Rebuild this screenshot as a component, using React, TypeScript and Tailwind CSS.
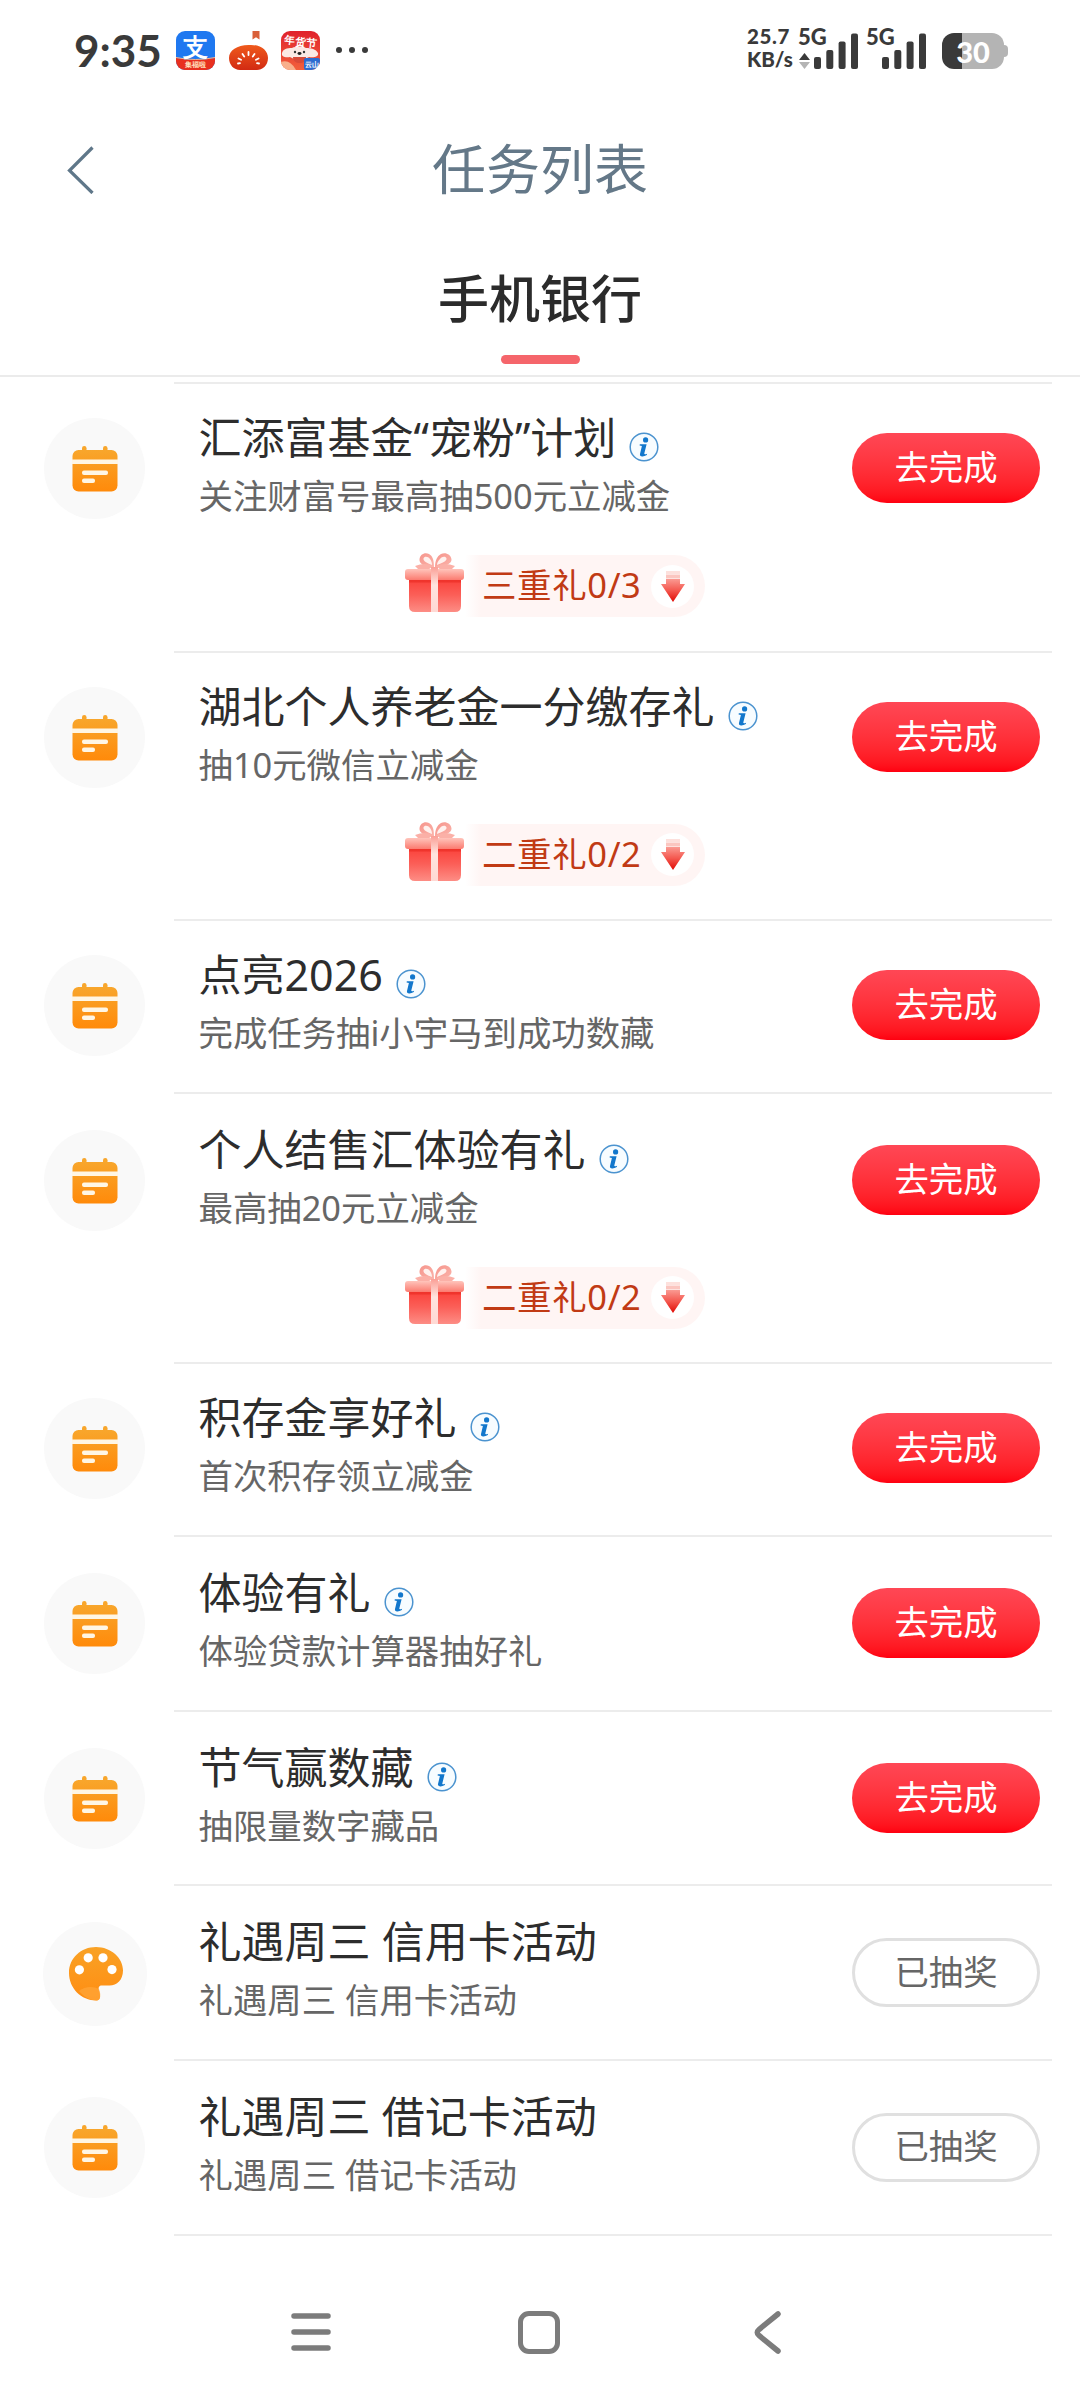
import React from "react";

type Task = {
  title: string;
  desc: string;
  info?: boolean;
  gift?: string;
  done?: boolean;
  icon?: "calendar" | "palette";
};

const tasks: Task[] = [
  { title: "汇添富基金“宠粉”计划", desc: "关注财富号最高抽500元立减金", info: true, gift: "三重礼0/3" },
  { title: "湖北个人养老金一分缴存礼", desc: "抽10元微信立减金", info: true, gift: "二重礼0/2" },
  { title: "点亮2026", desc: "完成任务抽i小宇马到成功数藏", info: true },
  { title: "个人结售汇体验有礼", desc: "最高抽20元立减金", info: true, gift: "二重礼0/2" },
  { title: "积存金享好礼", desc: "首次积存领立减金", info: true },
  { title: "体验有礼", desc: "体验贷款计算器抽好礼", info: true },
  { title: "节气赢数藏", desc: "抽限量数字藏品", info: true },
  { title: "礼遇周三 信用卡活动", desc: "礼遇周三 信用卡活动", done: true, icon: "palette" },
  { title: "礼遇周三 借记卡活动", desc: "礼遇周三 借记卡活动", done: true },
];

const AlipayIcon = () => (
  <svg width="39" height="39" viewBox="0 0 39 39">
    <defs>
      <clipPath id="alipayClip"><rect width="39" height="39" rx="9" /></clipPath>
    </defs>
    <g clipPath="url(#alipayClip)">
      <rect width="39" height="39" fill="#1f78f0" />
      <path d="M0 27 Q19.5 31 39 27 V39 H0Z" fill="#e8301f" />
      <path d="M0 26.5 Q19.5 30.5 39 26.5" stroke="#f6b48a" strokeWidth="1" fill="none" />
    </g>
    <text x="19.5" y="24.500" textAnchor="middle" fontSize="25" fontWeight="700" fill="#fff">支</text>
    <text x="19.5" y="36" textAnchor="middle" fontSize="6.5" fontWeight="700" fill="#ffe3c0">集福啦</text>
  </svg>
);

const TomatoIcon = () => (
  <svg width="39" height="39" viewBox="0 0 39 39">
    <defs>
      <linearGradient id="tomato" x1="0" y1="0" x2="0" y2="1">
        <stop offset="0" stopColor="#ef5a1c" />
        <stop offset="1" stopColor="#d22a12" />
      </linearGradient>
    </defs>
    <path d="M23.500 0h7v8.500l-3.500-2.200-3.500 2.200z" fill="#d9603a" />
    <path d="M19.500 14C31 13 39 19 39 27c0 8-6 12-11 12H11C5 39 0 34 0 27c0-8 8-12.500 19.500-13z" fill="url(#tomato)" />
    <g stroke="#fff" strokeWidth="1.800" strokeLinecap="round">
      <path d="M19.500 21v3M13.500 23l1.700 2.600M25.500 23l-1.700 2.600M9.500 27.500l2.500 1.300M29.500 27.500l-2.500 1.300M9 32.500l2-.4M30 32.500l-2-.4" />
    </g>
  </svg>
);

const ShopIcon = () => (
  <svg width="39" height="39" viewBox="0 0 39 39">
    <defs>
      <clipPath id="shopClip"><rect width="39" height="39" rx="9" /></clipPath>
      <linearGradient id="shopBg" x1="0" y1="0" x2="0" y2="1">
        <stop offset="0" stopColor="#e0222c" />
        <stop offset="1" stopColor="#f2603c" />
      </linearGradient>
    </defs>
    <g clipPath="url(#shopClip)">
      <rect width="39" height="39" fill="url(#shopBg)" />
      <path d="M1 22c1-4 5-5 10-5 4-2 10-2 14 0 5 0 10 1 12 5 1 4-5 5-9 4l-4 2h-11l-4-2c-4 1-9 0-8-4z" fill="#fbe9e4" />
      <circle cx="14" cy="21" r="1.200" fill="#333" />
      <circle cx="23" cy="21" r="1.200" fill="#333" />
      <ellipse cx="18.500" cy="22.500" rx="2" ry="1.400" fill="#222" />
      <path d="M12 26h13c0 4-3 6-6.500 6S12 30 12 26z" fill="#d84a38" />
      <path d="M0 31q9-3 15 8H0z" fill="#f8b08c" />
      <rect x="23" y="27" width="16" height="12" rx="2" fill="#2c6bd0" />
    </g>
    <text x="20" y="14" textAnchor="middle" fontSize="10.500" fontWeight="700" fill="#fff" transform="rotate(6 19 12)">年货节</text>
    <text x="31" y="35.500" textAnchor="middle" fontSize="7" fontWeight="700" fill="#fff">云山</text>
  </svg>
);

const SignalBars = () => (
  <svg width="44" height="36" viewBox="0 0 44 36" fill="#3a3a3a">
    <rect x="0" y="24" width="7" height="12" rx="2" />
    <rect x="12.300" y="17" width="7" height="19" rx="2" />
    <rect x="24.600" y="8.500" width="7" height="27.500" rx="2" />
    <rect x="37" y="0.500" width="7" height="35.500" rx="2" />
  </svg>
);

const StatusBar = () => (
  <div className="flex h-[100px] items-center pl-[74px] pr-[72px] font-['Lato'] text-[#3a3a3a]">
    <span className="w-[102px] text-[44px] font-bold leading-none">9:35</span>
    <div className="flex gap-[13.500px]">
      <AlipayIcon />
      <TomatoIcon />
      <ShopIcon />
    </div>
    <div className="ml-[16px] flex gap-[7px]">
      <i className="size-[6px] rounded-full bg-[#3a3a3a]" />
      <i className="size-[6px] rounded-full bg-[#3a3a3a]" />
      <i className="size-[6px] rounded-full bg-[#3a3a3a]" />
    </div>
    <div className="ml-auto flex h-[38px] items-end">
      <div className="mb-[-2px] w-[51px] whitespace-nowrap text-[20.500px] font-black leading-[23px]">
        <div className="tracking-[0.6px]">25.7</div>
        <div>KB/s</div>
      </div>
      <div className="relative flex w-[60px] items-end justify-end">
        <span className="absolute left-0 top-[-8px] text-[22px] font-black leading-[23px]">5G</span>
        <svg className="mr-[4px]" width="11" height="16" viewBox="0 0 11 16">
          <path d="M5.500 0L11 7H0z" fill="#3a3a3a" />
          <path d="M5.500 16L0 9h11z" fill="#b4b4b4" />
        </svg>
        <SignalBars />
      </div>
      <div className="relative ml-[8px] flex w-[60px] justify-end">
        <span className="absolute left-0 top-[-8px] text-[22px] font-black leading-[23px]">5G</span>
        <SignalBars />
      </div>
      <div className="ml-[16px] flex items-center">
        <div className="flex h-[36px] w-[62px] items-center justify-center rounded-[12px] bg-[linear-gradient(90deg,#3a3a3a_33%,#b4b4b4_33%)] text-[29px] font-black leading-none text-white">
          30
        </div>
        <div className="h-[12px] w-[4px] rounded-r-[4px] bg-[#b4b4b4]" />
      </div>
    </div>
  </div>
);

const CalendarIcon = () => (
  <svg width="46" height="46" viewBox="0 0 46 46">
    <defs>
      <linearGradient id="cal" x1="0" y1="0" x2="0" y2="1">
        <stop offset="0" stopColor="#f8a62c" />
        <stop offset="1" stopColor="#ff8a0a" />
      </linearGradient>
    </defs>
    <rect x="10" y="0" width="4.500" height="9" rx="2.200" fill="#f8a62c" />
    <rect x="31" y="0" width="4.500" height="9" rx="2.200" fill="#f8a62c" />
    <rect x="0.500" y="4" width="45" height="41.500" rx="6" fill="url(#cal)" />
    <rect x="0" y="13.500" width="46" height="4.500" fill="#fff6e4" />
    <rect x="10" y="24.500" width="26" height="4.500" rx="2" fill="#fff6e4" />
    <rect x="10" y="32.500" width="13" height="4.500" rx="2" fill="#fff6e4" />
  </svg>
);

const PaletteIcon = () => (
  <svg width="54" height="54" viewBox="0 0 54 54">
    <defs>
      <linearGradient id="pal" x1="0" y1="0" x2="0" y2="1">
        <stop offset="0" stopColor="#f9a226" />
        <stop offset="1" stopColor="#ff8d12" />
      </linearGradient>
    </defs>
    <path
      d="M27 0C42 0 54 11 54 23.500C54 33 48 38.500 40.500 38.500H33C30 38.500 29 40.500 30 43.500C31.500 48 32 53.500 27.500 53.500C12 53.500 0 41 0 26C0 11 12 0 27 0Z"
      fill="url(#pal)"
    />
    <path d="M10 44c6-5 14-5 20-2 2 5 2 11.500-2.500 11.500-7 0-13-4-17.500-9.500z" fill="#ffa63a" opacity="0.7" />
    <circle cx="19.200" cy="10.800" r="4.600" fill="#fff" />
    <circle cx="34" cy="10.800" r="4.600" fill="#fff" />
    <circle cx="10.400" cy="22.800" r="4.600" fill="#fff" />
    <circle cx="43" cy="22.600" r="4.600" fill="#fff" />
  </svg>
);

const InfoIcon = () => (
  <svg width="30" height="30" viewBox="0 0 30 30">
    <circle cx="15" cy="15" r="13.800" fill="#f7fcff" stroke="#4b93cf" strokeWidth="1.500" />
    <circle cx="16.600" cy="7.900" r="2.600" fill="#1277cc" />
    <path d="M10.800 12.300h6.800l-2.300 9.200q-.3 1.500 2.800.3l-.3 1.200q-2.400 1.500-4.600 1.400-2.700-.1-2.200-2.500l1.900-7.800-2.300-.5z" fill="#1277cc" />
  </svg>
);

const GiftIcon = () => (
  <svg width="60" height="62" viewBox="0 0 60 62">
    <defs>
      <linearGradient id="giftBox" x1="0" y1="0" x2="0" y2="1">
        <stop offset="0" stopColor="#fb3f38" />
        <stop offset="0.5" stopColor="#fb5f58" />
        <stop offset="1" stopColor="#fd8d85" />
      </linearGradient>
      <linearGradient id="giftLid" x1="0" y1="0" x2="0" y2="1">
        <stop offset="0" stopColor="#ffc4bb" />
        <stop offset="1" stopColor="#fb7b70" />
      </linearGradient>
      <linearGradient id="ribbon" x1="0" y1="0" x2="0" y2="1">
        <stop offset="0" stopColor="#fb9f96" />
        <stop offset="0.4" stopColor="#ffe4df" />
        <stop offset="1" stopColor="#ffd9d4" />
      </linearGradient>
      <linearGradient id="bow" x1="0" y1="0" x2="1" y2="1">
        <stop offset="0" stopColor="#f6958c" />
        <stop offset="1" stopColor="#fbb3aa" />
      </linearGradient>
    </defs>
    <path d="M28 15C20 15 14 12 14.500 7.500C15 2 20 0 24 2C28 4 29 9 29 15Z" fill="url(#bow)" />
    <path d="M27 13C22 11 18 9 18.500 6.500C19 4 23 4 25 7C26.500 9 27 11 27 13Z" fill="#fff1ee" />
    <path d="M31 15C39 15 47 12 46.500 7.500C46 2 40 0 36 2C32 4 30 9 30 15Z" fill="url(#bow)" />
    <path d="M32 13C37 11 42 9 41.500 6.500C41 4 37 4 35 7C33 9 32 11 32 13Z" fill="#fff1ee" />
    <path d="M10 14Q20 10 28 14L23 18H14ZM50 14Q40 10 31 14L36 18H46Z" fill="#fbb0a7" />
    <path d="M4 26H56V54Q56 60 50 60H10Q4 60 4 54Z" fill="url(#giftBox)" />
    <rect x="0" y="17" width="59" height="11" rx="3" fill="url(#giftLid)" />
    <path d="M4 28H56V30.500H4Z" fill="#e92a22" opacity="0.6" />
    <rect x="26" y="15" width="7" height="45" fill="url(#ribbon)" />
  </svg>
);

const DownArrow = () => (
  <svg width="24" height="31" viewBox="0 0 24 31">
    <defs>
      <linearGradient id="arrow" x1="0" y1="0" x2="0" y2="1">
        <stop offset="0" stopColor="#fa9a92" />
        <stop offset="0.5" stopColor="#f4574e" />
        <stop offset="1" stopColor="#e00a04" />
      </linearGradient>
    </defs>
    <rect x="5" y="0" width="14" height="3" fill="#fde0dc" />
    <rect x="5" y="3.500" width="14" height="4" fill="#fbc6c0" />
    <path d="M5 8H19V13H24L12 31L0 13H5Z" fill="url(#arrow)" />
  </svg>
);

const GiftBadge = ({ label }: { label: string }) => (
  <div className="ml-[405px] mt-[35px] flex items-start">
    <GiftIcon />
    <div className="mt-[3px] flex h-[62px] w-[240px] items-center rounded-r-full bg-[linear-gradient(90deg,#ffffff,#fff5f4_16px)] pl-[17px]">
      <span className="w-[169px] whitespace-nowrap pb-[2px] text-[34.500px] leading-[50px] tracking-[0.6px] text-[#c13a14]">{label}</span>
      <span className="flex size-[43px] items-center justify-center rounded-full bg-white">
        <DownArrow />
      </span>
    </div>
  </div>
);

const TaskRow = ({ task }: { task: Task }) => (
  <li className={task.gift ? "h-[268.500px]" : "h-[174.700px] pb-[2px]"}>
    <div className="flex h-full flex-col">
      <div className="flex h-[133px] items-start">
        {task.icon === "palette" ? (
          <div className="ml-[43px] mt-[34px] flex size-[104px] items-center justify-center rounded-full bg-[#f9f9f9] pl-[2px]">
            <PaletteIcon />
          </div>
        ) : (
          <div className="ml-[44px] mt-[34px] flex size-[101px] items-center justify-center rounded-full bg-[#f9f9f9] pt-[1px]">
            <CalendarIcon />
          </div>
        )}
        <div className="absolute ml-[198.500px] mt-[24px] whitespace-nowrap">
          <div className="flex items-start gap-[13px]">
            <h2 className="text-[43px] leading-[60px] text-[#2d2d2d]">{task.title}</h2>
            {task.info && <span className="mt-[24px]"><InfoIcon /></span>}
          </div>
          <p className="mt-[3px] text-[34.400px] leading-[50px] text-[#666]">{task.desc}</p>
        </div>
        {task.done ? (
          <button className="ml-auto mr-[40px] mt-[50px] h-[69px] w-[188px] rounded-full border-[3px] border-[#e0e0e0] text-[34.400px] leading-[58px] text-[#666]">
            <span className="relative -top-px">已抽奖</span>
          </button>
        ) : (
          <button className="ml-auto mr-[40px] mt-[49px] h-[70px] w-[188px] rounded-full bg-linear-to-b from-[#ff4755] to-[#ff0010] text-[34.400px] leading-[66px] text-white">
            <span className="relative -top-px">去完成</span>
          </button>
        )}
      </div>
      {task.gift && <GiftBadge label={task.gift} />}
      <div className="ml-[174px] mr-[28px] mt-auto h-[2px] shrink-0 bg-[#ececec]" />
    </div>
  </li>
);

export default function App() {
  return (
    <div className="flex h-[2400px] w-[1080px] flex-col overflow-hidden bg-white font-['Noto_Sans','Noto_Sans_CJK_SC',sans-serif]">
      <StatusBar />

      <header className="flex h-[140px] items-center justify-between px-[67px]">
        <svg width="28" height="48" viewBox="0 0 28 48" fill="none" stroke="#5f7789" strokeWidth="3.200">
          <path d="M25.500 1.500L2.500 24.500L25.500 47" />
        </svg>
        <h1 className="pb-[2px] text-[54px] leading-[80px] text-[#647888]">任务列表</h1>
        <span className="w-[28px]" />
      </header>

      {/* Tab */}
      <div className="flex h-[137px] flex-col items-center border-b-2 border-[#ebebeb]">
        <span className="mt-[18px] text-[51px] font-medium leading-[80px] text-[#2b2b2b]">手机银行</span>
        <span className="mt-[17px] h-[9px] w-[79px] rounded-full bg-[#f5656b]" />
      </div>

      {/* Lista de tareas */}
      <div className="ml-[174px] mr-[28px] mt-[5px] h-[2px] shrink-0 bg-[#ececec]" />
      <ul className="relative">
        {tasks.map((task) => (
          <TaskRow key={task.title} task={task} />
        ))}
      </ul>

      <nav className="mt-auto flex h-[136px] shrink-0 items-center pl-[291px]">
        <svg width="40" height="38" viewBox="0 0 40 38" stroke="#7c7c7c" strokeWidth="5.500" strokeLinecap="round">
          <path d="M3 3h34M3 19h34M3 35h34" />
        </svg>
        <span className="ml-[187px] h-[43px] w-[42px] rounded-[11px] border-[5px] border-[#7c7c7c]" />
        <svg className="ml-[194px]" width="27" height="43" viewBox="0 0 27 43" fill="none" stroke="#7c7c7c" strokeWidth="5.500" strokeLinecap="round">
          <path d="M24 3L5 18.500Q1.500 21.500 5 24.500L24 40" />
        </svg>
      </nav>
    </div>
  );
}
